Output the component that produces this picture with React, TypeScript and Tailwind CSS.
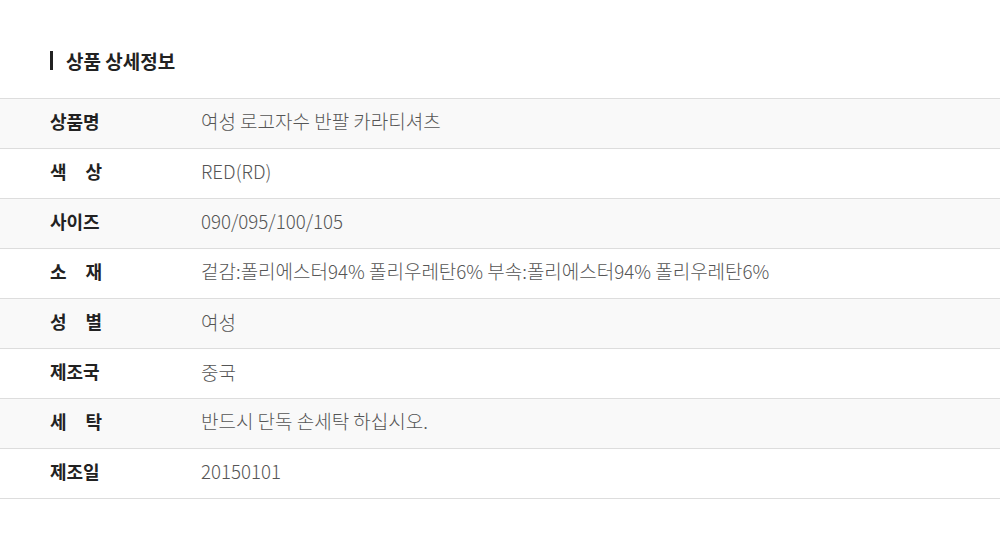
import React from "react";

const rows: [string[], string][] = [
  [["상품명"], "여성 로고자수 반팔 카라티셔츠"],
  [["색", "상"], "RED(RD)"],
  [["사이즈"], "090/095/100/105"],
  [["소", "재"], "겉감:폴리에스터94% 폴리우레탄6% 부속:폴리에스터94% 폴리우레탄6%"],
  [["성", "별"], "여성"],
  [["제조국"], "중국"],
  [["세", "탁"], "반드시 단독 손세탁 하십시오."],
  [["제조일"], "20150101"],
];

function Value({ text }: { text: string }) {
  const parts = text.split(/([가-힣]+)/).filter((p) => p.length > 0);
  return (
    <>
      {parts.map((p, i) =>
        /[가-힣]/.test(p) ? (
          <span key={i} className="text-[19px]">
            {p}
          </span>
        ) : (
          <span key={i} className="text-[18.7px]">{p}</span>
        )
      )}
    </>
  );
}

export default function App() {
  return (
    <div
      className="w-[1000px] h-[548px] bg-white pt-[50px]"
      style={{ fontFamily: '"Noto Sans CJK KR", "Noto Sans", sans-serif' }}
    >
      <div className="flex items-center pl-[50px] h-[20px]">
        <div className="w-[3px] h-[19px] bg-[#222]" />
        <div className="ml-[13px] text-[19px] font-bold text-[#222] leading-none">상품 상세정보</div>
      </div>
      <div className="mt-[28px] border-t border-[#dddddd]">
        {rows.map(([label, value], i) => (
          <div
            key={i}
            className={`flex items-center h-[50px] pb-[5px] border-b border-[#dddddd] ${i % 2 === 0 ? "bg-[#f9f9f9]" : "bg-white"}`}
          >
            <div className="pl-[50px] w-[201px] shrink-0">
              <div className="flex justify-between w-[52px] text-[18px] font-bold text-[#222] leading-none">
                {label.map((c, j) => (
                  <span key={j}>{c}</span>
                ))}
              </div>
            </div>
            <div className="text-[18px] font-light text-[#555] leading-none whitespace-nowrap">
              <Value text={value} />
            </div>
          </div>
        ))}
      </div>
    </div>
  );
}
